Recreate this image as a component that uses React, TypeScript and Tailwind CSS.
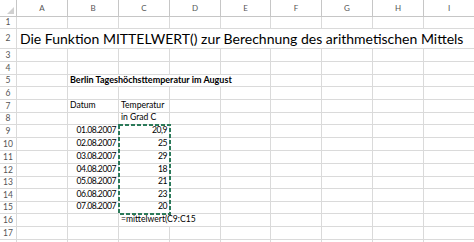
import React from 'react';

type CellDef = { span?: number; text?: string; align?: 'left' | 'right'; bold?: boolean; title?: boolean };

const COLS = ['A', 'B', 'C', 'D', 'E', 'F', 'G', 'H', 'I'];

const dates = ['01.08.2007', '02.08.2007', '03.08.2007', '04.08.2007', '05.08.2007', '06.08.2007', '07.08.2007'];
const temps = ['20,9', '25', '29', '18', '21', '23', '20'];

// cells per row, starting at column A; missing columns are filled with empty cells
const rows: CellDef[][] = [
  [],
  [{ span: 9, text: 'Die Funktion MITTELWERT() zur Berechnung des arithmetischen Mittels', title: true }],
  [],
  [],
  [{}, { span: 4, text: 'Berlin Tageshöchsttemperatur im August', bold: true }],
  [],
  [{}, { text: 'Datum' }, { text: 'Temperatur' }],
  [{}, {}, { text: 'in Grad C' }],
  ...dates.map((d, i) => [{}, { text: d, align: 'right' as const }, { text: temps[i], align: 'right' as const }]),
  [{}, {}, { span: 2, text: '=mittelwert(C9:C15' }],
  [],
  [],
];

const spanClass: Record<number, string> = {
  1: 'col-span-1',
  2: 'col-span-2',
  4: 'col-span-4',
  9: 'col-span-9',
};

function fillRow(cells: CellDef[]) {
  const out = [...cells];
  let used = out.reduce((n, c) => n + (c.span ?? 1), 0);
  while (used < 9) {
    out.push({});
    used++;
  }
  return out;
}

function Cell({ cell }: { cell: CellDef }) {
  let size = 'text-[8.6px] pb-[2px]';
  if (cell.title) size = 'text-[14px] pb-[2px] pl-[3px]';
  else if (cell.bold) size = 'text-[9px] pb-[2px] font-bold';
  else if (cell.align === 'right') size = 'text-[8.6px] pb-[2px] tracking-[-0.45px]';
  return (
    <div
      className={[
        'flex items-end whitespace-nowrap overflow-visible border-r border-b border-[#dadada] text-black leading-none',
        spanClass[cell.span ?? 1],
        cell.align === 'right' ? 'justify-end pr-[2px]' : 'justify-start pl-[2px]',
        size,
      ].join(' ')}
    >
      {cell.text}
    </div>
  );
}

export default function App() {
  return (
    <div className="relative w-[474px] h-[242px] overflow-hidden bg-white font-['Lato',sans-serif]">
      <div className="grid grid-cols-[17px_51px_51px_51px_51px_50px_51px_51px_51px_51px] grid-rows-[17px_12px_20px_13px_13px_12px_13px_13px_12px_13px_13px_13px_13px_12px_13px_12px_13px_13px_13px]">
        {/* column headers */}
        <div className="relative border-r border-b border-[#c6c6c6]">
          <svg className="absolute right-[2px] bottom-[2px]" width="7" height="7" viewBox="0 0 7 7">
            <polygon points="7,0 7,7 0,7" fill="#d0d0d0" />
          </svg>
        </div>
        {COLS.map((c) => (
          <div
            key={c}
            className="flex items-center justify-center border-r border-b border-[#c6c6c6] text-[8px] text-[#555]"
          >
            {c}
          </div>
        ))}

        {rows.map((cells, r) => (
          <React.Fragment key={r}>
            <div className="flex items-center justify-center border-r border-b border-[#dadada] text-[8.5px] text-[#555]">
              {r < 17 ? r + 1 : ''}
            </div>
            {fillRow(cells).map((cell, i) => (
              <Cell key={i} cell={cell} />
            ))}
          </React.Fragment>
        ))}
      </div>

      {/* copy marquee around C9:C15 */}
      <svg className="absolute left-[118px] top-[124px]" width="53" height="91" viewBox="0 0 53 91">
        <rect x="1" y="1" width="51" height="89" fill="none" stroke="#2c7a5a" strokeWidth="2" strokeDasharray="4 2" />
      </svg>
    </div>
  );
}
